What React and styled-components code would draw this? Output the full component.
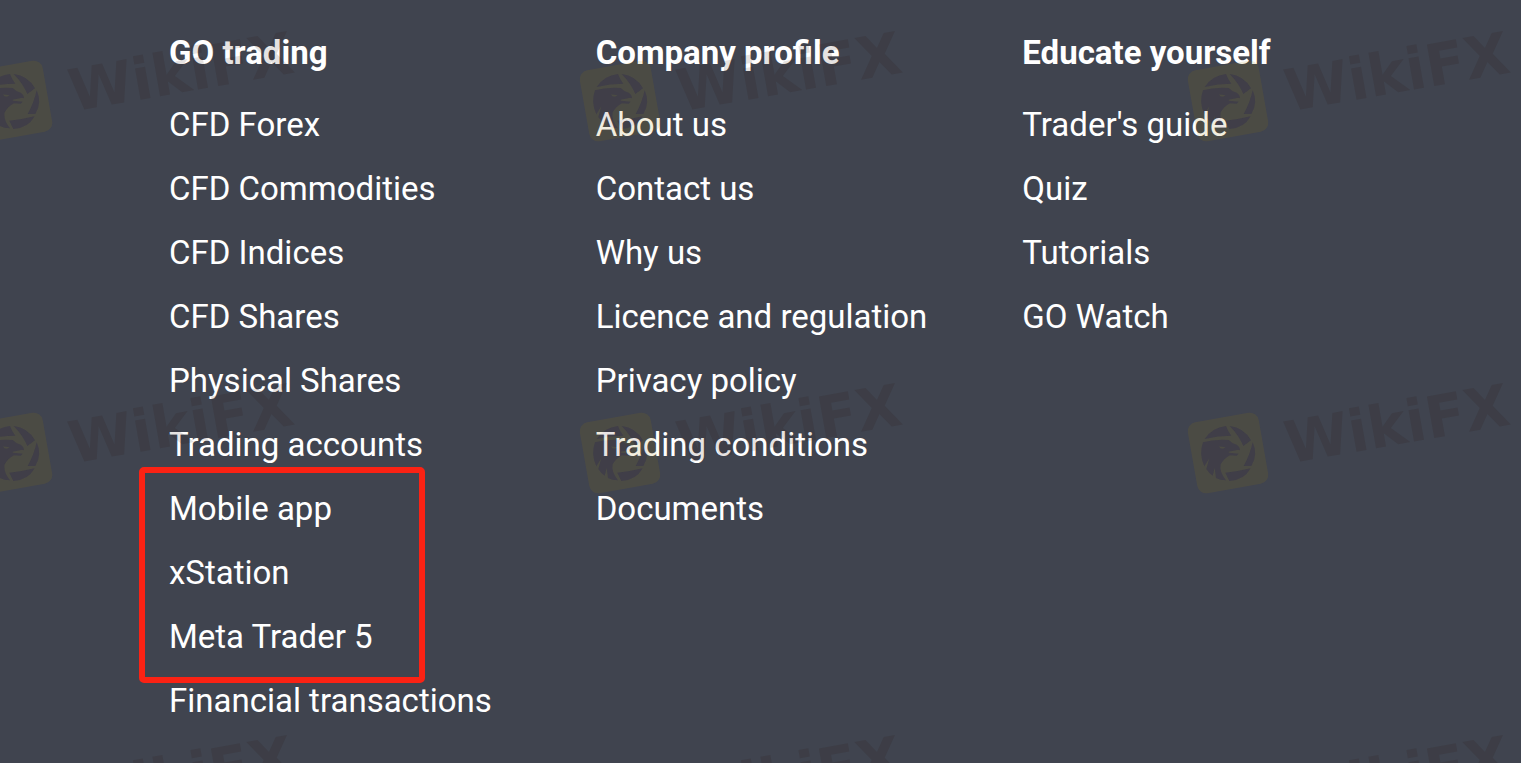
import React from "react";
import styled, { createGlobalStyle } from "styled-components";

const GlobalStyle = createGlobalStyle`
  *, *::before, *::after { box-sizing: border-box; }
  html { background: #40444f; }
  body { margin: 0; font-family: Roboto, "Liberation Sans", sans-serif; }
`;

const Footer = styled.footer`
  position: relative;
  min-height: 100vh;
  padding: 29px 72px 30px 169px;
  overflow: hidden;
  background: #40444f;
  color: #fff;
  font-size: 33px;
  line-height: 48px;
`;

const Columns = styled.nav`
  display: grid;
  grid-template-columns: repeat(3, minmax(0, 1fr));
`;

const Column = styled.section`
  min-width: 0;
`;

const Heading = styled.h2`
  margin: 0 0 24px;
  font-size: inherit;
  font-weight: 700;
`;

const Links = styled.ul`
  display: flex;
  flex-direction: column;
  gap: 16px;
  margin: 0;
  padding: 0;
  list-style: none;
`;

const Group = styled(Links)`
  position: relative;

  &::after {
    content: "";
    position: absolute;
    inset: -18px auto -22px -30px;
    width: 286px;
    border: 6px solid #fb2214;
    border-radius: 5px;
    pointer-events: none;
  }
`;

const Link = styled.a`
  color: inherit;
  text-decoration: none;
  white-space: nowrap;
`;

const Overlay = styled.svg`
  position: absolute;
  inset: 0;
  width: 100%;
  height: 100%;
  pointer-events: none;
`;

const MarkText = styled.text`
  fill: #2c1008;
  fill-opacity: 0.12;
  font: 700 58px "DejaVu Sans", sans-serif;
`;

const columns = [
  {
    title: "GO trading",
    links: [
      "CFD Forex",
      "CFD Commodities",
      "CFD Indices",
      "CFD Shares",
      "Physical Shares",
      "Trading accounts",
      ["Mobile app", "xStation", "Meta Trader 5"],
      "Financial transactions",
    ],
  },
  {
    title: "Company profile",
    links: [
      "About us",
      "Contact us",
      "Why us",
      "Licence and regulation",
      "Privacy policy",
      "Trading conditions",
      "Documents",
    ],
  },
  {
    title: "Educate yourself",
    links: ["Trader's guide", "Quiz", "Tutorials", "GO Watch"],
  },
];

function Entry({ label }) {
  if (Array.isArray(label)) {
    return (
      <li>
        <Group>
          {label.map((name) => (
            <Entry key={name} label={name} />
          ))}
        </Group>
      </li>
    );
  }
  return (
    <li>
      <Link href="#">{label}</Link>
    </li>
  );
}

function MarkDefs() {
  return (
    <defs>
      <g id="eagle" transform="rotate(10) scale(0.3333) translate(-144 -144)">
        {/* shutter blades */}
        <path d="M74 102Q96 68 138 63Q144 80 154 92Q114 92 74 102Z" />
        <path d="M149 63Q192 68 213 106L190 123Q176 90 149 63Z" />
        <path d="M218 112Q235 148 214 183L191 183Q210 150 218 112Z" />
        <path d="M212 190Q192 226 148 228L136 203Q172 200 212 190Z" />
        {/* head, beak and neck feathers, with the eye and feather gaps left open */}
        <path
          fillRule="evenodd"
          d="M69 112Q104 102 146 105Q157 117 170 119Q180 126 180 136L174 134L146 140L146 143L176 146L170 152L150 151Q132 160 122 178Q117 200 138 226Q120 226 108 219L104 188L98 212Q86 204 79 192L88 160L73 184Q56 148 69 112ZM117 124L137 127Q130 134 121 130Z"
        />
      </g>
      <mask id="cutout" maskUnits="userSpaceOnUse" x="-40" y="-40" width="80" height="80">
        <rect x="-40" y="-40" width="80" height="80" fill="#fff" />
        <use href="#eagle" fill="#000" />
      </mask>
    </defs>
  );
}

function Mark({ x, y }) {
  return (
    <g transform={`translate(${x} ${y}) rotate(-10)`}>
      <rect
        x="-36"
        y="-36"
        width="72"
        height="72"
        rx="9"
        fill="#9c7d00"
        fillOpacity="0.13"
        mask="url(#cutout)"
      />
      <use href="#eagle" fill="#401818" fillOpacity="0.12" />
      <MarkText x="58" y="21">WikiFX</MarkText>
    </g>
  );
}

export default function App() {
  return (
    <>
      <GlobalStyle />
      <Footer>
        <Columns aria-label="Footer">
          {columns.map(({ title, links }) => (
            <Column key={title}>
              <Heading>{title}</Heading>
              <Links>
                {links.map((label) => (
                  <Entry key={String(label)} label={label} />
                ))}
              </Links>
            </Column>
          ))}
        </Columns>
        <Overlay aria-hidden="true">
          <MarkDefs />
          {[0, 1, 2].map((row) =>
            [0, 1, 2].map((col) => (
              <Mark key={`${row}-${col}`} x={12 + col * 608} y={101 + row * 352} />
            ))
          )}
        </Overlay>
      </Footer>
    </>
  );
}
